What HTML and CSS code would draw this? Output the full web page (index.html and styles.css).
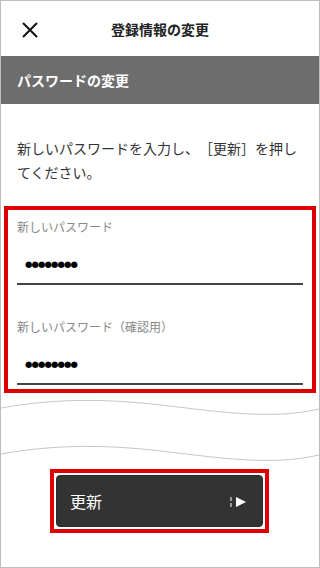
FILE: index.html
```html
<!DOCTYPE html>
<html lang="ja">
<head>
<meta charset="utf-8">
<title>登録情報の変更</title>
<link rel="stylesheet" href="styles.css">
</head>
<body>
<div class="page">
  <header class="topbar">
    <span class="close">
      <svg width="16" height="16" viewBox="0 0 16 16"><path d="M1 1 L15 15 M15 1 L1 15" stroke="#111" stroke-width="2" fill="none"/></svg>
    </span>
    <h1 class="title">登録情報の変更</h1>
  </header>
  <div class="section">パスワードの変更</div>
  <p class="lead">新しいパスワードを入力し、［更新］を押してください。</p>
  <div class="form-box">
    <div class="field">
      <div class="label">新しいパスワード</div>
      <div class="input"><span class="dots">●●●●●●●●</span></div>
    </div>
    <div class="field second">
      <div class="label">新しいパスワード（確認用）</div>
      <div class="input"><span class="dots">●●●●●●●●</span></div>
    </div>
  </div>
  <svg class="waves" width="318" height="76" viewBox="0 0 318 76">
    <path d="M0 15 C50 6 100 5 160 12 S270 27 318 16" stroke="#c6c6c6" stroke-width="1" fill="none"/>
    <path d="M0 61 C50 52 100 51 160 58 S270 73 318 62" stroke="#c6c6c6" stroke-width="1" fill="none"/>
  </svg>
  <div class="btn-wrap">
    <button class="btn">
      <span>更新</span>
      <svg width="16" height="12" viewBox="0 0 16 12"><path d="M1 1 V5 M1 7 V11" stroke="#9a9a9a" stroke-width="2"/><path d="M6 1 L16 6 L6 11 Z" fill="#fff"/></svg>
    </button>
  </div>
</div>
</body>
</html>
```
FILE: styles.css
```css
* { box-sizing: border-box; }
html, body { margin: 0; padding: 0; }
body {
  font-family: "Noto Sans CJK JP", "Noto Sans", sans-serif;
  background: #fff;
  text-spacing-trim: space-all;
}
.page {
  width: 320px;
  height: 568px;
  border: 1px solid #bdbdbd;
  overflow: hidden;
  display: flex;
  flex-direction: column;
}
.topbar {
  height: 55px;
  display: flex;
  align-items: center;
  position: relative;
  flex-shrink: 0;
}
.close {
  position: absolute;
  left: 21px;
  top: 21px;
  width: 16px;
  height: 16px;
  display: block;
}
.close svg { display: block; }
.title {
  margin: 0;
  width: 100%;
  text-align: center;
  font-size: 14px;
  font-weight: bold;
  color: #222;
  line-height: 20px;
  padding-top: 1px;
}
.section {
  height: 48px;
  background: #6d6d6d;
  color: #fff;
  font-size: 14px;
  font-weight: bold;
  line-height: 48px;
  padding-left: 16px;
  flex-shrink: 0;
}
.lead {
  margin: 32px 0 0;
  padding: 0 16px;
  font-size: 14px;
  line-height: 24px;
  color: #333;
  text-spacing-trim: space-all;
}
.form-box {
  margin: 22px 3px 0;
  border: 4px solid #e00000;
  padding: 8px 9px 4px;
}
.label {
  font-size: 12px;
  line-height: 18px;
  color: #888;
}
.input {
  height: 49px;
  padding-top: 5px;
  line-height: 39px;
  border-bottom: 2px solid #444;
  padding-left: 8px;
}
.dots {
  font-family: "DejaVu Sans", sans-serif;
  font-size: 8.5px;
  letter-spacing: -0.9px;
  color: #000;
}
.field.second { margin-top: 33px; }
.waves { display: block; flex-shrink: 0; }
.btn-wrap {
  margin-left: 49px;
  width: 219px;
  border: 4px solid #e00000;
  padding: 2px;
}
.btn {
  width: 100%;
  height: 52px;
  background: #333;
  border: 1px solid #2a2a2a;
  border-radius: 4px;
  color: #fff;
  font-family: "Noto Sans CJK JP", "Noto Sans", sans-serif;
  font-size: 16px;
  display: flex;
  align-items: center;
  justify-content: space-between;
  padding: 0 16px 0 13px;
  cursor: pointer;
}
.btn svg { display: block; margin-top: 1px; }
```
